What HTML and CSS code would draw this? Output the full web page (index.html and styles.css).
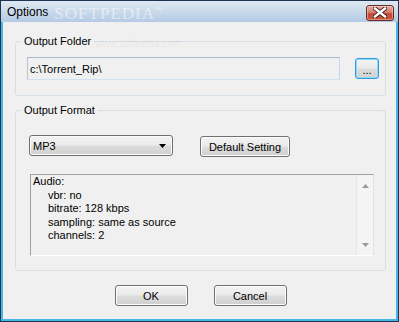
FILE: index.html
```html
<!DOCTYPE html>
<html lang="en">
<head>
    <meta charset="UTF-8">
    <title>Options</title>
    <link rel="stylesheet" href="styles.css">
</head>
<body>
    <div class="window">
        <div class="titlebar">
            <span class="title">Options</span>
            <div class="watermark">SOFTPEDIA<sup>™</sup></div>
            <button class="close-btn" aria-label="Close">
                <svg width="14" height="11" viewBox="0 0 14 11">
                    <path d="M2 1.5 L12 9.5 M12 1.5 L2 9.5" stroke="#3a1a14" stroke-width="4.2" stroke-linecap="square"/>
                    <path d="M2 1.5 L12 9.5 M12 1.5 L2 9.5" stroke="#ffffff" stroke-width="2.4" stroke-linecap="square"/>
                </svg>
            </button>
        </div>

        <div class="client">
            <div class="site-mark">www.softpedia.com</div>

            <fieldset class="group">
                <legend>Output Folder</legend>
                <div class="group-body folder-row">
                    <input class="path-input" type="text" value="c:\Torrent_Rip\">
                    <button class="btn btn-browse">...</button>
                </div>
            </fieldset>

            <fieldset class="group group-format">
                <legend>Output Format</legend>
                <div class="group-body format-body">
                    <div class="format-row">
                        <div class="combo">
                            <span>MP3</span>
                            <svg class="combo-arrow" width="7" height="4" viewBox="0 0 7 4"><path d="M0 0 H7 L3.5 4 Z" fill="#000"/></svg>
                        </div>
                        <button class="btn btn-default">Default Setting</button>
                    </div>
                    <div class="info-box">
                        <div class="info-text">
                            <div>Audio:</div>
                            <div class="indent">vbr: no</div>
                            <div class="indent">bitrate: 128 kbps</div>
                            <div class="indent">sampling: same as source</div>
                            <div class="indent">channels: 2</div>
                        </div>
                        <div class="scrollbar">
                            <svg width="7" height="4" viewBox="0 0 7 4"><path d="M3.5 0 L7 4 H0 Z" fill="#9a9a9a"/></svg>
                            <svg width="7" height="4" viewBox="0 0 7 4"><path d="M0 0 H7 L3.5 4 Z" fill="#9a9a9a"/></svg>
                        </div>
                    </div>
                </div>
            </fieldset>

            <div class="actions">
                <button class="btn btn-action">OK</button>
                <button class="btn btn-action">Cancel</button>
            </div>
        </div>
    </div>
</body>
</html>
```

FILE: styles.css
```css
body {
    margin: 0;
    font-family: "Liberation Sans", Arial, sans-serif;
    font-size: 11px;
    color: #000;
}

.window {
    width: 399px;
    height: 322px;
    box-sizing: border-box;
    border: 1px solid #1c3450;
    background: #45b6e8;
    display: flex;
    flex-direction: column;
}

.titlebar {
    height: 21px;
    flex: none;
    display: flex;
    align-items: center;
    padding: 0 4px 0 6px;
    background: linear-gradient(#dfe8f2, #c6d7ea 60%, #b3cae4);
}

.title {
    font-size: 12px;
}

.watermark {
    flex: 1;
    margin-left: 6px;
    font-family: "Liberation Serif", serif;
    font-size: 17px;
    line-height: 19px;
    letter-spacing: 1px;
    color: rgba(255, 255, 255, 0.5);
}

.watermark sup {
    font-size: 7px;
    font-family: "Liberation Sans", sans-serif;
}

.close-btn {
    width: 28px;
    height: 16px;
    margin-top: 2px;
    padding: 0;
    border: 1px solid #6b2a22;
    border-radius: 3px;
    background: linear-gradient(#e7aa9f, #d6806f 45%, #c34a38 55%, #c8553f);
    box-shadow: inset 0 0 0 1px rgba(255, 255, 255, 0.35);
    display: flex;
    align-items: center;
    justify-content: center;
}

.client {
    position: relative;
    flex: 1;
    margin: 0 2px 2px;
    padding: 13px 0 0 12px;
    background: #f0f0f0;
    display: flex;
    flex-direction: column;
}

.site-mark {
    position: absolute;
    left: 92px;
    top: 16px;
    font-size: 10px;
    color: rgba(0, 0, 0, 0.06);
}

.group {
    width: 371px;
    box-sizing: border-box;
    margin: 0;
    padding: 0;
    min-width: 0;
    border: 1px solid #d5dfe5;
    border-radius: 3px;
}

.group legend {
    margin-left: 5px;
    padding: 0 3px;
    line-height: 13px;
}

.group-format {
    margin-top: 8px;
}

.folder-row {
    display: flex;
    align-items: center;
    gap: 15px;
    padding: 9px 0 15px 11px;
}

.path-input {
    width: 313px;
    height: 23px;
    box-sizing: border-box;
    margin: 0;
    padding: 0 2px;
    font: inherit;
    background: #f0f0f0;
    border: 1px solid;
    border-color: #abb9c9 #c6d8ec #d3e2f2 #b5c3d2;
    outline: none;
}

.btn {
    box-sizing: border-box;
    height: 21px;
    margin: 0;
    padding: 0;
    font: inherit;
    color: #000;
    border: 1px solid #707070;
    border-radius: 3px;
    background: linear-gradient(#f2f2f2, #ebebeb 48%, #dddddd 52%, #cfcfcf);
    box-shadow: inset 0 0 0 1px #fcfcfc;
}

.btn-browse {
    width: 24px;
    padding-top: 3px;
    border-color: #3399dd;
    box-shadow: inset 0 0 0 1px #8fdcf8;
    background: linear-gradient(#f4f4f4, #ebebeb 48%, #dddddd 52%, #d2d2d2);
}

.format-body {
    padding: 18px 11px 14px 13px;
}

.format-row {
    display: flex;
    align-items: flex-start;
    gap: 27px;
}

.combo {
    width: 144px;
    height: 21px;
    box-sizing: border-box;
    border: 1px solid #707070;
    border-radius: 3px;
    background: linear-gradient(#f2f2f2, #ebebeb 48%, #dddddd 52%, #cfcfcf);
    box-shadow: inset 0 0 0 1px #fcfcfc;
    display: flex;
    align-items: center;
    justify-content: space-between;
    padding: 0 6px 0 3px;
}

.btn-default {
    width: 90px;
    margin-top: 1px;
}

.info-box {
    margin: 17px 0 0 1px;
    width: 344px;
    height: 82px;
    box-sizing: border-box;
    border: 1px solid;
    border-color: #a0a0a0 #e3e3e3 #ffffff #a0a0a0;
    display: flex;
}

.info-text {
    flex: 1;
    padding: 0 2px;
    line-height: 13.5px;
}

.info-text .indent {
    padding-left: 15px;
}

.scrollbar {
    width: 17px;
    box-sizing: border-box;
    border-left: 1px solid #e6e6e6;
    background: #f4f4f4;
    display: flex;
    flex-direction: column;
    align-items: center;
    justify-content: space-between;
    padding: 9px 0 8px;
}

.actions {
    display: flex;
    justify-content: center;
    gap: 26px;
    margin-top: 14px;
    padding-right: 10px;
}

.btn-action {
    width: 73px;
}
```
